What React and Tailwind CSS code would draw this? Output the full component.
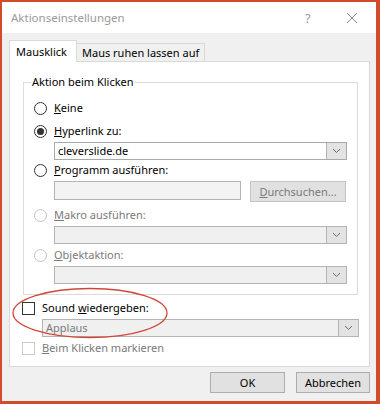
import React from 'react';

// kleine Bausteine fuer den Windows-Dialog
function Radio({ checked, disabled }) {
  return (
    <span className={`w-[13px] h-[13px] rounded-full border flex items-center justify-center bg-white shrink-0 ${disabled ? 'border-[#c4c4c4]' : 'border-[#333333]'}`}>
      {checked && <span className="w-[7px] h-[7px] rounded-full bg-[#333333]" />}
    </span>
  );
}

function Check({ disabled }) {
  return <span className={`w-[13px] h-[13px] border bg-white shrink-0 ${disabled ? 'border-[#cccccc]' : 'border-[#333333]'}`} />;
}

function Chevron() {
  return (
    <svg width="9" height="6" viewBox="0 0 9 6">
      <polyline points="1,1 4.5,4.5 8,1" fill="none" stroke="#6a6a6a" strokeWidth="1" />
    </svg>
  );
}

function Combo({ value, disabled, className }) {
  return (
    <div className={`h-[18px] border flex ${disabled ? 'bg-[#f0f0f0] border-[#b4b4b4]' : 'bg-white border-[#a9a9a9]'} ${className}`}>
      <span className={`flex-1 pl-[3px] leading-[16px] ${disabled ? 'text-[#7a7a7a]' : 'text-black'}`}>{value}</span>
      <span className="w-[20px] h-full border-l border-[#b4b4b4] bg-[#e3e3e3] flex items-center justify-center">
        <Chevron />
      </span>
    </div>
  );
}

function RadioRow({ checked, disabled, mnemonic, rest, className }) {
  return (
    <div className={`h-[16px] flex items-center gap-[7px] pl-[10px] ${className}`}>
      <Radio checked={checked} disabled={disabled} />
      <span className={disabled ? 'text-[#7a7a7a]' : 'text-black'}>
        <u>{mnemonic}</u>{rest}
      </span>
    </div>
  );
}

export default function App() {
  return (
    <div className="w-[380px] h-[404px] bg-[#f0f0f0] border-[#d24b2a] border-t-2 border-l-2 border-r-4 border-b-[3px] flex flex-col font-['Noto_Sans',sans-serif] text-[11px] leading-[16px] text-black whitespace-nowrap">
      {/* Titelleiste */}
      <div className="h-[31px] bg-white flex items-center pl-[9px] shrink-0">
        <span className="text-[#9a9a9a] text-[11.5px] flex-1">Aktionseinstellungen</span>
        <span className="text-[#9a9a9a] text-[13px] w-[12px] mr-[29px]">?</span>
        <svg width="12" height="12" viewBox="0 0 12 12" className="mr-[18px]">
          <path d="M1 1 L11 11 M11 1 L1 11" stroke="#8a8a8a" strokeWidth="1" />
        </svg>
      </div>

      <div className="flex-1 pl-[7px] pt-[7px]">
        {/* Reiter */}
        <div className="flex items-end h-[21px]">
          <div className="h-[22px] -mb-px relative z-10 bg-white border border-b-0 border-[#d9d9d9] pl-[6px] flex items-center w-[68px]">
            Mausklick
          </div>
          <div className="h-[18px] bg-[#f0f0f0] border border-l-0 border-b-0 border-[#d9d9d9] pl-[5px] flex items-center w-[128px]">
            Maus ruhen lassen auf
          </div>
        </div>

        {/* Reiterinhalt */}
        <div className="w-[361px] h-[306px] bg-white border border-[#d9d9d9] relative">
          <div className="ml-[13px] mt-[20px] w-[335px] h-[213px] border border-[#dcdcdc]">
            <div className="-mt-[9px] ml-[7px] px-[1px] bg-white w-fit h-[16px] leading-[16px]">Aktion beim Klicken</div>
            <RadioRow className="mt-[10px]" mnemonic="K" rest="eine" />
            <RadioRow className="mt-[7px]" checked mnemonic="H" rest="yperlink zu:" />
            <Combo className="ml-[30px] mt-[3px] w-[293px]" value="cleverslide.de" />
            <RadioRow className="mt-[2px]" mnemonic="P" rest="rogramm ausführen:" />
            <div className="ml-[30px] mt-[3px] flex items-start h-[21px]">
              <div className="w-[187px] h-[19px] bg-[#f3f3f3] border border-[#b4b4b4]" />
              <div className="ml-[9px] w-[96px] h-[21px] bg-[#e1e1e1] border border-[#c4c4c4] flex items-center justify-center text-[#7a7a7a]">
                <span><u>D</u>urchsuchen...</span>
              </div>
            </div>
            <RadioRow className="mt-[5px]" disabled mnemonic="M" rest="akro ausführen:" />
            <Combo className="ml-[30px] mt-[3px] w-[293px]" disabled value="" />
            <RadioRow className="mt-[3px]" disabled mnemonic="O" rest="bjektaktion:" />
            <Combo className="ml-[30px] mt-[3px] w-[293px]" disabled value="" />
          </div>

          <div className="ml-[12px] mt-[5px] h-[16px] flex items-center gap-[7px]">
            <Check />
            <span>Sound <u>w</u>iedergeben:</span>
          </div>
          <Combo className="ml-[32px] mt-[3px] w-[317px]" disabled value="Applaus" />
          <div className="ml-[12px] mt-[3px] h-[16px] flex items-center gap-[7px]">
            <Check disabled />
            <span className="text-[#7a7a7a]"><u>B</u>eim Klicken markieren</span>
          </div>

          {/* rote Markierung */}
          <svg className="absolute left-[1px] top-[225px]" width="160" height="54" viewBox="0 0 160 54">
            <ellipse cx="79" cy="26" rx="77" ry="24.5" fill="none" stroke="#d0473a" strokeWidth="1.3" />
          </svg>
        </div>

        {/* Schaltflaechen */}
        <div className="mt-[5px] w-[361px] flex justify-end gap-[11px]">
          <div className="w-[75px] h-[21px] bg-[#e1e1e1] border border-[#adadad] flex items-center justify-center">OK</div>
          <div className="w-[74px] h-[21px] bg-[#e1e1e1] border border-[#adadad] flex items-center justify-center">Abbrechen</div>
        </div>
      </div>
    </div>
  );
}
